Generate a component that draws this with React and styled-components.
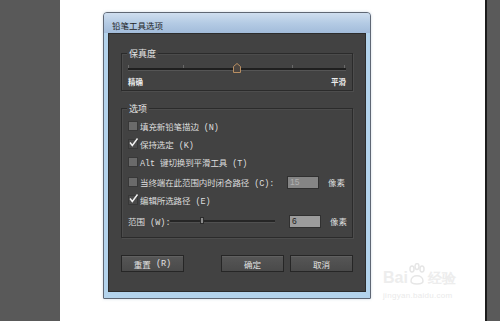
import React from "react";
import styled, { createGlobalStyle } from "styled-components";

const Global = createGlobalStyle`
  html, body { margin: 0; padding: 0; background: #fff; }
  body { width: 500px; height: 321px; overflow: hidden; font-family: "Noto Sans CJK SC", "Noto Sans", sans-serif; }
`;

const Page = styled.div`
  display: flex;
  width: 500px;
  height: 321px;
`;

const SideLeft = styled.div`
  width: 60px;
  background: #595959;
`;

const SideRight = styled.div`
  width: 13px;
  background: #5a5a5a;
  border-left: 2px solid #1c1c1c;
`;

const Stage = styled.div`
  position: relative;
  flex: 1;
  background: #fff;
  padding: 12px 0 0 43px;
`;

const Dialog = styled.div`
  width: 266px;
  height: 285px;
  border: 1px solid #5f6774;
  border-radius: 4px 4px 1px 1px;
  background: #b3d3ec;
  display: flex;
  flex-direction: column;
  box-shadow: 0 0 3px rgba(120, 150, 180, 0.35);
`;

const TitleBar = styled.div`
  height: 20px;
  box-sizing: border-box;
  padding: 3px 0 0 8px;
  display: flex;
  align-items: center;
  font-size: 8.5px;
  color: #1e1e1e;
  border-radius: 3px 3px 0 0;
  background: linear-gradient(#cfdeef, #b4cbe4 50%, #a2bcda);
`;

const Panel = styled.div`
  margin: 0 4px 6px 4px;
  flex: 1;
  background: #424242;
  border: 1px solid #2c2c2c;
  padding: 19px 12px 0 12px;
  color: #dedede;
  font-size: 8.5px;
`;

const Group = styled.div`
  border: 1px solid #2b2b2b;
  box-shadow: inset 1px 1px 0 #4c4c4c, 1px 1px 0 #4d4d4d;
  height: ${(p) => p.$h}px;
  margin-top: ${(p) => p.$mt || 0}px;
  padding: 0 6px;
  box-sizing: border-box;
`;

const Legend = styled.div`
  display: block;
  width: fit-content;
  margin-top: -5px;
  margin-left: -1px;
  padding: 0 2px;
  line-height: 10px;
  height: 10px;
  background: #424242;
  font-size: 9px;
  color: #e4e4e4;
`;

const Fidelity = styled.div`
  margin-top: 2px;
`;

const TrackWrap = styled.div`
  position: relative;
  height: 13px;
`;

const Track = styled.div`
  position: absolute;
  left: 0;
  right: 0;
  top: 7px;
  height: 2px;
  background: #1f1f1f;
  box-shadow: 0 1px 0 #555;
`;

const Tick = styled.div`
  position: absolute;
  top: 4px;
  width: 1px;
  height: 3px;
  background: #6a6a6a;
`;

const Thumb = styled.svg`
  position: absolute;
  top: 2px;
  left: 50%;
  margin-left: -4px;
`;

const Ends = styled.div`
  display: flex;
  justify-content: space-between;
  margin-top: 3px;
  font-size: 7.5px;
  font-weight: bold;
  color: #ececec;
  line-height: 9px;
`;

const Options = styled.div`
  padding-top: 3px;
  display: flex;
  flex-direction: column;
`;

const Row = styled.div`
  display: flex;
  align-items: center;
  height: 18px;
  margin-top: ${(p) => p.$mt || 0}px;
  white-space: nowrap;
`;

const Box = styled.span`
  width: 8px;
  height: 8px;
  border: 1px solid #383838;
  background: ${(p) => (p.$checked ? "#4a4a4a" : "#6a6a6a")};
  position: relative;
  margin-right: 2px;
  flex: none;
`;

const Check = styled.svg`
  position: absolute;
  left: -1px;
  top: -3px;
`;

const Label = styled.span`
  flex: 1;
  letter-spacing: -0.1px;
`;

const Latin = styled.span`
  font-family: "Liberation Mono", monospace;
  font-size: 8.5px;
`;

const Field = styled.div`
  width: 28px;
  height: 11px;
  border: 1px solid #303030;
  background: ${(p) => (p.$disabled ? "#858585" : "#9c9c9c")};
  color: ${(p) => (p.$disabled ? "#b0b0b0" : "#1c1c1c")};
  font-family: "Liberation Sans", sans-serif;
  font-size: 8.5px;
  line-height: 11px;
  padding-left: 2px;
  box-sizing: content-box;
  margin-right: 9px;
  flex: none;
`;

const Unit = styled.span`
  width: 18px;
  flex: none;
`;

const RangeLabel = styled.span`
  width: 42px;
  flex: none;
`;

const MiniSlider = styled.div`
  position: relative;
  width: 105px;
  height: 10px;
  margin-right: 14px;
  flex: none;
`;

const MiniTrack = styled.div`
  position: absolute;
  left: 0;
  right: 0;
  top: 4px;
  height: 2px;
  background: #262626;
  box-shadow: 0 1px 0 #505050;
`;

const MiniThumb = styled.div`
  position: absolute;
  left: 30px;
  top: 1px;
  width: 4px;
  height: 7px;
  background: #8c8c8c;
  border: 1px solid #2c2c2c;
  box-sizing: border-box;
`;

const Spacer = styled.div`
  flex: 1;
`;

const Buttons = styled.div`
  display: flex;
  margin-top: 17px;
  gap: 6px;
`;

const Button = styled.div`
  width: 61px;
  height: 15px;
  border: 1px solid #262626;
  background: linear-gradient(#565656, #4a4a4a);
  box-shadow: inset 0 1px 0 #606060;
  display: flex;
  align-items: center;
  justify-content: center;
  font-size: 8.5px;
  color: #e2e2e2;
  margin-left: ${(p) => p.$ml || 0}px;
`;

const Watermark = styled.div`
  position: absolute;
  left: 323px;
  top: 263px;
  color: #e9e9e9;
  font-family: "Liberation Sans", sans-serif;
  display: flex;
  flex-direction: column;
  align-items: flex-start;
`;

const WmTop = styled.div`
  display: flex;
  align-items: flex-end;
  font-size: 16px;
  font-weight: bold;
  line-height: 18px;
  color: #ededed;
`;

const WmSub = styled.div`
  font-size: 8px;
  margin-top: 4px;
  color: #eaeaea;
  letter-spacing: 0.3px;
`;

const CheckMark = () => (
  <Check width="11" height="11" viewBox="0 0 11 11">
    <path d="M2 5.5 L4.3 8.5 L9.5 1.5" fill="none" stroke="#f2f2f2" strokeWidth="1.4" />
  </Check>
);

const CheckRow = ({ checked, text, latin, mt, children }) => (
  <Row $mt={mt}>
    <Box $checked={checked}>{checked && <CheckMark />}</Box>
    <Label>
      {text}
      {latin && <Latin> {latin}</Latin>}
    </Label>
    {children}
  </Row>
);

export default function App() {
  return (
    <>
      <Global />
      <Page>
        <SideLeft />
        <Stage>
          <Dialog>
            <TitleBar>铅笔工具选项</TitleBar>
            <Panel>
              <Group $h={38}>
                <Legend>保真度</Legend>
                <Fidelity>
                  <TrackWrap>
                    <Track />
                    {[0, 25, 50, 75, 99].map((p) => (
                      <Tick key={p} style={{ left: `${p}%` }} />
                    ))}
                    <Thumb width="8" height="10" viewBox="0 0 8 10">
                      <path d="M0.5 9.5 V3.5 L4 0.5 L7.5 3.5 V9.5 Z" fill="#4b4540" stroke="#b98f63" strokeWidth="1" />
                    </Thumb>
                  </TrackWrap>
                  <Ends>
                    <span>精确</span>
                    <span>平滑</span>
                  </Ends>
                </Fidelity>
              </Group>
              <Group $h={130} $mt={17}>
                <Legend>选项</Legend>
                <Options>
                  <CheckRow text="填充新铅笔描边" latin="(N)" />
                  <CheckRow checked text="保持选定" latin="(K)" />
                  <Row>
                    <Box />
                    <Label>
                      <Latin>Alt </Latin>键切换到平滑工具<Latin> (T)</Latin>
                    </Label>
                  </Row>
                  <CheckRow text="当终端在此范围内时闭合路径" latin="(C):" mt={2}>
                    <Field $disabled>15</Field>
                    <Unit>像素</Unit>
                  </CheckRow>
                  <CheckRow checked text="编辑所选路径" latin="(E)" />
                  <Row $mt={3}>
                    <RangeLabel>
                      范围<Latin> (W):</Latin>
                    </RangeLabel>
                    <MiniSlider>
                      <MiniTrack />
                      <MiniThumb />
                    </MiniSlider>
                    <Spacer />
                    <Field>6</Field>
                    <Unit>像素</Unit>
                  </Row>
                </Options>
              </Group>
              <Buttons>
                <Button>
                  重置<Latin>&nbsp;(R)</Latin>
                </Button>
                <Button $ml={31}>确定</Button>
                <Button>取消</Button>
              </Buttons>
            </Panel>
          </Dialog>
          <Watermark>
            <WmTop>
              Bai
              <svg width="18" height="24" viewBox="0 0 18 24">
                <g fill="none" stroke="#e6e6e6" strokeWidth="1.5">
                  <ellipse cx="4" cy="6" rx="2" ry="3" />
                  <ellipse cx="9" cy="3.5" rx="2" ry="3" />
                  <ellipse cx="14" cy="6" rx="2" ry="3" />
                  <path d="M3 18 C3 11 15 11 15 18 C15 22 3 22 3 18 Z" />
                </g>
              </svg>
              <span style={{ fontSize: 14, marginLeft: 2 }}>经验</span>
            </WmTop>
            <WmSub>jingyan.baidu.com</WmSub>
          </Watermark>
        </Stage>
        <SideRight />
      </Page>
    </>
  );
}
